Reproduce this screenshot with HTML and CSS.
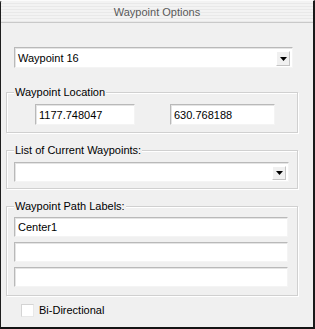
FILE: index.html
```html
<!DOCTYPE html>
<html lang="en">
<head>
    <meta charset="UTF-8">
    <title>Waypoint Options</title>
    <link rel="stylesheet" href="styles.css">
</head>
<body>
    <div class="window">
        <div class="titleBar">Waypoint Options</div>

        <div class="panel">
            <!-- waypoint picker -->
            <div class="combo waypointCombo">
                <span class="comboText">Waypoint 16</span>
                <span class="comboButton">
                    <svg width="7" height="4" viewBox="0 0 7 4"><polygon points="0,0 7,0 3.5,4" fill="#000"/></svg>
                </span>
            </div>

            <fieldset class="group locationGroup">
                <legend>Waypoint Location</legend>
                <div class="coordRow">
                    <input class="textBox coordX" type="text" value="1177.748047">
                    <input class="textBox coordY" type="text" value="630.768188">
                </div>
            </fieldset>

            <fieldset class="group listGroup">
                <legend>List of Current Waypoints:</legend>
                <div class="combo listCombo">
                    <span class="comboText"></span>
                    <span class="comboButton">
                        <svg width="7" height="4" viewBox="0 0 7 4"><polygon points="0,0 7,0 3.5,4" fill="#000"/></svg>
                    </span>
                </div>
            </fieldset>

            <fieldset class="group labelsGroup">
                <legend>Waypoint Path Labels:</legend>
                <div class="labelList">
                    <input class="textBox labelBox" type="text" value="Center1">
                    <input class="textBox labelBox" type="text" value="">
                    <input class="textBox labelBox" type="text" value="">
                </div>
            </fieldset>

            <label class="checkRow">
                <span class="checkBox"></span>
                <span class="checkText">Bi-Directional</span>
            </label>
        </div>
    </div>
</body>
</html>
```

FILE: styles.css
```css
body {
    margin: 0;
    background-color: #ffffff;
    font-family: "Liberation Sans", Arial, sans-serif;
    font-size: 11px;
    color: #000000;
}

.window {
    width: 315px;
    height: 329px;
    box-sizing: border-box;
    background-color: #f0f0f0;
    border-top: 1px solid #fbfbfb;
    border-left: 1px solid #1e1e1e;
    border-right: 2px solid #1a1a1a;
    border-bottom: 2px solid #141414;
    border-top-left-radius: 3px;
    overflow: hidden;
}

.titleBar {
    height: 21px;
    line-height: 22px;
    text-align: center;
    color: #595959;
    border-bottom: 1px solid #c9c9c9;
    background: repeating-linear-gradient(#f3f3f3 0 2px, #e9e9e9 2px 3px);
}

.panel {
    padding: 24px 15px 0 5px;
}

/* combo boxes */
.combo {
    display: flex;
    align-items: center;
    box-sizing: border-box;
    background-color: #ffffff;
    border-top: 1px solid #b9b9b9;
    border-left: 1px solid #b9b9b9;
    border-right: 1px solid #f4f4f4;
    border-bottom: 1px solid #f4f4f4;
    box-shadow: inset 1px 1px 0 #e4e4e4;
    padding: 0 2px 0 2px;
}
.waypointCombo {
    margin-left: 8px;
    width: 279px;
    height: 21px;
}
.listCombo {
    width: 275px;
    height: 20px;
}
.comboText {
    flex: 1;
    padding-left: 1px;
}
.comboButton {
    display: flex;
    align-items: center;
    justify-content: center;
    box-sizing: border-box;
    width: 14px;
    height: 15px;
    margin-top: 2px;
    background-color: #f0f0f0;
    border-top: 1px solid #ffffff;
    border-left: 1px solid #ffffff;
    border-right: 1px solid #c4c4c4;
    border-bottom: 1px solid #c4c4c4;
}
.listCombo .comboButton {
    height: 14px;
    margin-top: 1px;
}

/* group boxes */
.group {
    margin: 10px 0 0 0;
    min-width: 0;
    border: 1px solid #d0d0d0;
    box-shadow: inset 1px 1px 0 #ffffff, 1px 1px 0 #ffffff;
    padding: 5px 9px 7px 7px;
}
.group legend {
    padding: 0 1px;
    line-height: 14px;
    background-color: #f0f0f0;
}
.locationGroup {
    margin-top: 17px;
}
.listGroup {
    padding-bottom: 6px;
}
.labelsGroup {
    padding-top: 4px;
    padding-bottom: 8px;
}

/* text boxes */
.textBox {
    display: block;
    box-sizing: border-box;
    margin: 0;
    height: 20px;
    padding: 0 3px;
    font-family: "Liberation Sans", Arial, sans-serif;
    font-size: 11px;
    color: #000000;
    background-color: #ffffff;
    border-top: 1px solid #b9b9b9;
    border-left: 1px solid #b9b9b9;
    border-right: 1px solid #f4f4f4;
    border-bottom: 1px solid #f4f4f4;
    box-shadow: inset 1px 1px 0 #e4e4e4;
    outline: none;
}

.coordRow {
    display: flex;
    gap: 35px;
    padding-left: 21px;
}
.coordX {
    width: 100px;
    height: 21px;
}
.coordY {
    width: 105px;
    height: 21px;
}

.labelList {
    display: flex;
    flex-direction: column;
    gap: 5px;
}
.labelBox {
    width: 274px;
}

/* checkbox */
.checkRow {
    display: flex;
    align-items: center;
    gap: 5px;
    margin-top: 8px;
    padding-left: 15px;
}
.checkBox {
    width: 13px;
    height: 13px;
    box-sizing: border-box;
    background-color: #ffffff;
    border-top: 1px solid #d4d4d4;
    border-left: 1px solid #d4d4d4;
    border-right: 1px solid #e8e8e8;
    border-bottom: 1px solid #e8e8e8;
}
.checkText {
    line-height: 13px;
}
```
